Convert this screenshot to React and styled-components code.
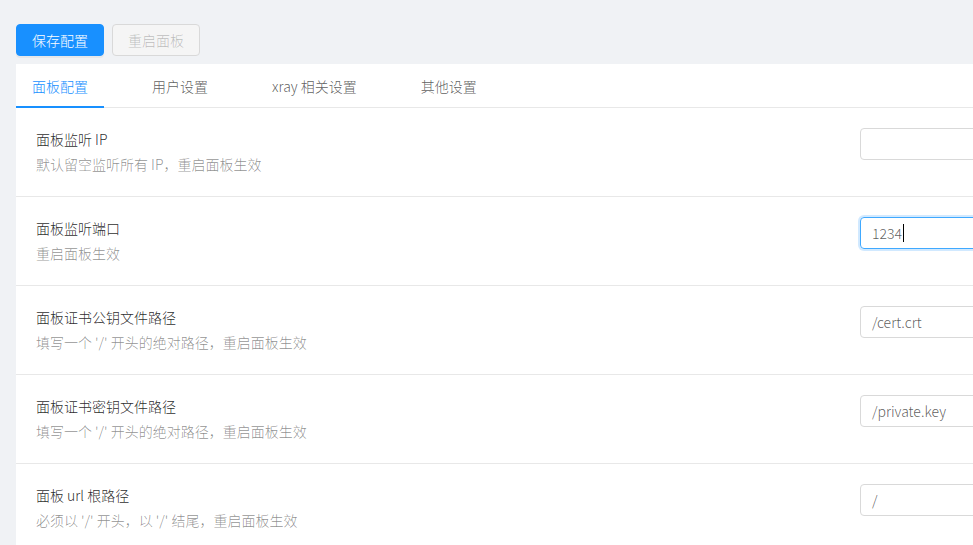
import React from "react";
import styled, { createGlobalStyle } from "styled-components";

const GlobalStyle = createGlobalStyle`
  html, body {
    margin: 0;
    background: #f0f2f5;
    overflow: hidden;
    font-family: "Noto Sans CJK SC", "Open Sans", sans-serif;
    font-size: 14px;
    font-weight: 300;
    color: rgba(0, 0, 0, 0.65);
  }
`;

const Page = styled.div`
  padding: 24px 0 0 16px;
`;

const Toolbar = styled.div`
  display: flex;
  gap: 8px;
  margin-bottom: 8px;
`;

const Button = styled.button`
  height: 32px;
  padding: 0 15px;
  border-radius: 4px;
  font-family: inherit;
  font-weight: inherit;
  font-size: 14px;
  line-height: 30px;
  border: 1px solid ${(p) => (p.primary ? "#1890ff" : "#d9d9d9")};
  background: ${(p) => (p.primary ? "#1890ff" : "#f5f5f5")};
  color: ${(p) => (p.primary ? "#fff" : "rgba(0, 0, 0, 0.25)")};
  box-shadow: ${(p) => (p.primary ? "0 2px 0 rgba(0, 0, 0, 0.045)" : "none")};
  cursor: ${(p) => (p.disabled ? "not-allowed" : "pointer")};
`;

const Card = styled.div`
  background: #fff;
  overflow: hidden;
`;

const TabBar = styled.div`
  display: flex;
  gap: 32px;
  border-bottom: 1px solid #e8e8e8;
  height: 43px;
`;

const Tab = styled.div`
  position: relative;
  padding: 12px 16px;
  line-height: 20px;
  color: ${(p) => (p.active ? "#1890ff" : "rgba(0, 0, 0, 0.65)")};
  white-space: nowrap;

  &::after {
    content: "";
    display: ${(p) => (p.active ? "block" : "none")};
    position: absolute;
    left: 0;
    right: 0;
    bottom: -1px;
    height: 2px;
    background: #1890ff;
  }
`;

const Item = styled.div`
  display: flex;
  align-items: flex-start;
  padding: 20px 20px 21px;
  border-bottom: 1px solid #e8e8e8;
`;

const Meta = styled.div`
  flex: 0 0 824px;
`;

const Title = styled.div`
  color: rgba(0, 0, 0, 0.85);
  line-height: 22px;
  margin-bottom: 3px;
`;

const Desc = styled.div`
  color: rgba(0, 0, 0, 0.45);
  line-height: 22px;
`;

const Field = styled.div`
  flex: 0 0 300px;
  box-sizing: border-box;
  height: 32px;
  padding: 0 11px;
  display: flex;
  align-items: center;
  border-radius: 4px;
  border: 1px solid ${(p) => (p.focused ? "#40a9ff" : "#d9d9d9")};
  box-shadow: ${(p) => (p.focused ? "0 0 0 2px rgba(24, 144, 255, 0.2)" : "none")};
  color: rgba(0, 0, 0, 0.65);
  font-size: 14px;
`;

const Caret = styled.span`
  display: inline-block;
  width: 1px;
  height: 18px;
  margin-left: 1px;
  background: #000;
`;

const tabs = ["面板配置", "用户设置", "xray 相关设置", "其他设置"];

const settings = [
  { title: "面板监听 IP", desc: "默认留空监听所有 IP，重启面板生效", value: "" },
  { title: "面板监听端口", desc: "重启面板生效", value: "1234", focused: true },
  { title: "面板证书公钥文件路径", desc: "填写一个 '/' 开头的绝对路径，重启面板生效", value: "/cert.crt" },
  { title: "面板证书密钥文件路径", desc: "填写一个 '/' 开头的绝对路径，重启面板生效", value: "/private.key" },
  { title: "面板 url 根路径", desc: "必须以 '/' 开头，以 '/' 结尾，重启面板生效", value: "/" },
];

export default function App() {
  return (
    <Page>
      <GlobalStyle />
      <Toolbar>
        <Button primary>保存配置</Button>
        <Button disabled>重启面板</Button>
      </Toolbar>
      <Card>
        <TabBar>
          {tabs.map((t, i) => (
            <Tab key={t} active={i === 0}>
              {t}
            </Tab>
          ))}
        </TabBar>
        {settings.map((s) => (
          <Item key={s.title}>
            <Meta>
              <Title>{s.title}</Title>
              <Desc>{s.desc}</Desc>
            </Meta>
            <Field focused={s.focused}>
              {s.value}
              {s.focused && <Caret />}
            </Field>
          </Item>
        ))}
      </Card>
    </Page>
  );
}
